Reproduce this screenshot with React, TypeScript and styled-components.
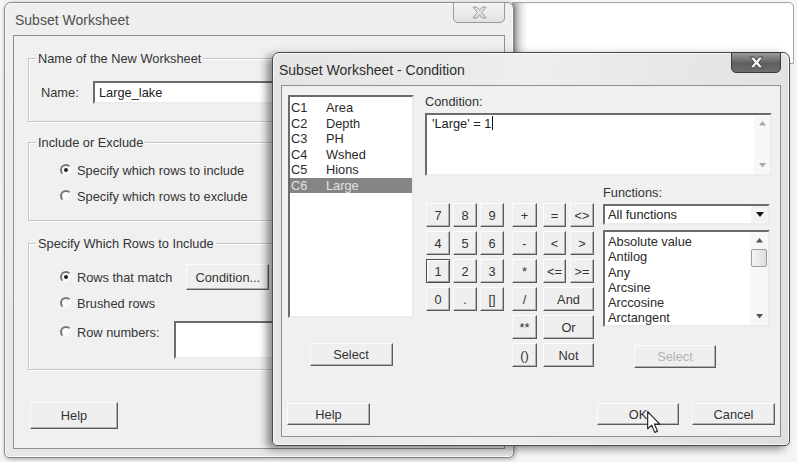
import React from "react";
import styled, { createGlobalStyle, css } from "styled-components";

const GlobalStyle = createGlobalStyle`
  html, body {
    margin: 0;
    padding: 0;
    background: #f5f5f5;
  }
  body {
    font-family: "Liberation Sans", Arial, sans-serif;
    font-size: 12.8px;
    color: #353535;
  }
`;

const uiFont = `12.8px "Liberation Sans", Arial, sans-serif`;

const Desktop = styled.div`
  position: relative;
  width: 797px;
  height: 462px;
  overflow: hidden;
  background: #f5f5f5;
`;

// white pane of another window peeking out behind the dialogs
const BackPane = styled.div`
  position: absolute;
  left: 512px;
  top: 2px;
  width: 282px;
  height: 62px;
  box-sizing: border-box;
  background: #fff;
  border: 1px solid #a4a4a4;
  border-radius: 0 5px 0 0;
  box-shadow: inset 12px 0 10px -6px rgba(0, 0, 0, 0.35);
`;

const Frame = styled.section<{ $x: number; $y: number; $w: number; $h: number; $active?: boolean }>`
  position: absolute;
  left: ${(p) => p.$x}px;
  top: ${(p) => p.$y}px;
  width: ${(p) => p.$w}px;
  height: ${(p) => p.$h}px;
  box-sizing: border-box;
  display: flex;
  flex-direction: column;
  padding: 0 8px 8px;
  border: 1px solid ${(p) => (p.$active ? "#4a4a4a" : "#8a8a8a")};
  border-radius: 7px 7px 5px 5px;
  background: ${(p) =>
    p.$active
      ? "linear-gradient(100deg, #e4e4e4 0%, #eeeeee 45%, #dedede 100%)"
      : "linear-gradient(180deg, #efefef, #e6e6e6)"};
  box-shadow: inset 0 0 0 1px rgba(255, 255, 255, 0.7),
    ${(p) => (p.$active ? "-5px 3px 9px rgba(0,0,0,.45)" : "1px 1px 4px rgba(0,0,0,.35)")};
`;

const TitleBar = styled.header`
  height: 32px;
  flex-shrink: 0;
  display: flex;
  align-items: flex-start;
  justify-content: space-between;
`;

const Title = styled.h1<{ $active?: boolean }>`
  margin: 0 0 0 ${(p) => (p.$active ? -2 : 2)}px;
  padding-top: 9px;
  font: 14px "Liberation Sans", Arial, sans-serif;
  color: ${(p) => (p.$active ? "#2e2e2e" : "#505050")};
`;

const CloseButton = styled.div<{ $active?: boolean }>`
  width: ${(p) => (p.$active ? 50 : 52)}px;
  height: 21px;
  margin-top: -1px;
  box-sizing: border-box;
  display: flex;
  align-items: center;
  justify-content: center;
  border-radius: 0 0 5px 5px;
  border: 1px solid ${(p) => (p.$active ? "#3a3a3a" : "#9a9a9a")};
  background: ${(p) =>
    p.$active ? "linear-gradient(180deg, #9a9a9a, #5e5e5e 55%, #6e6e6e)" : "linear-gradient(180deg, #f4f4f4, #e2e2e2)"};
`;

const Client = styled.div`
  flex: 1;
  min-height: 0;
  display: flex;
  flex-direction: column;
  background: #f0f0f0;
  border: 1px solid #8e8e8e;
`;

/* ---------- common controls ---------- */

const PushButton = styled.button<{ $w: number; $h: number; $focused?: boolean }>`
  width: ${(p) => p.$w}px;
  height: ${(p) => p.$h}px;
  flex-shrink: 0;
  box-sizing: border-box;
  padding: 0;
  font: ${uiFont};
  color: #333;
  background: #efefef;
  border: 1px solid;
  border-color: #fbfbfb #5a5a5a #5a5a5a #fbfbfb;
  box-shadow: inset -1px -1px 0 #b2b2b2;
  ${(p) =>
    p.$focused &&
    css`
      border-color: #4e4e4e;
      box-shadow: inset 1px 1px 0 #fff, inset -1px -1px 0 #9a9a9a;
    `}
  &:disabled {
    color: #b4b4b4;
  }
`;

const sunken = css`
  box-sizing: border-box;
  background: #fff;
  border: 2px solid;
  border-color: #6c6c6c #ececec #ececec #6c6c6c;
`;

const RadioRow = styled.label<{ $align?: string; $h?: number; $top?: number }>`
  display: flex;
  align-items: ${(p) => p.$align || "center"};
  height: ${(p) => (p.$h ? `${p.$h}px` : "auto")};
  margin-top: ${(p) => p.$top || 0}px;
  gap: 14px;
`;

const RadioOption = styled.span`
  height: 22px;
  display: flex;
  align-items: center;
  gap: 5px;
`;

const RadioMark = styled.span<{ $checked?: boolean }>`
  position: relative;
  width: 12px;
  height: 12px;
  box-sizing: border-box;
  border-radius: 50%;
  border: 2px solid;
  border-color: #767676 #f4f4f4 #f4f4f4 #767676;
  background: #fafafa;
  ${(p) =>
    p.$checked &&
    css`
      &::after {
        content: "";
        position: absolute;
        left: 2px;
        top: 2px;
        width: 4px;
        height: 4px;
        border-radius: 50%;
        background: #222;
      }
    `}
`;

/* ---------- back dialog ---------- */

const BackBody = styled.div`
  display: flex;
  flex-direction: column;
  padding: 0 12px 0 14px;
`;

const Group = styled.div<{ $gap: number }>`
  position: relative;
  margin-top: ${(p) => p.$gap}px;
  border: 1px solid #c4c4c4;
  box-shadow: 1px 1px 0 #fff, inset 1px 1px 0 #fff;
`;

// caption sitting on the group's top border
const GroupTitle = styled.span`
  position: absolute;
  left: 7px;
  top: -8px;
  padding: 0 2px;
  line-height: 15px;
  background: #f0f0f0;
  color: #333;
`;

const GroupContent = styled.div<{ $pad: string }>`
  display: flex;
  flex-direction: column;
  padding: ${(p) => p.$pad};
`;

const NameRow = styled.div`
  display: flex;
  align-items: center;
`;

const NameLabel = styled.span`
  width: 52px;
`;

const TextField = styled.div<{ $w: number; $h: number }>`
  ${sunken};
  width: ${(p) => p.$w}px;
  height: ${(p) => p.$h}px;
  padding: 2px 4px;
  line-height: 15px;
  color: #222;
`;

const BackFooter = styled.div`
  margin: 32px 0 0 2px;
`;

/* ---------- condition dialog ---------- */

const CondBody = styled.div`
  display: flex;
  gap: 11px;
  padding: 9px 8px 0 6px;
`;

const ColumnPane = styled.div`
  width: 126px;
  display: flex;
  flex-direction: column;
  align-items: center;
  gap: 25px;
`;

const ListBox = styled.ul<{ $w: number; $h: number }>`
  ${sunken};
  width: ${(p) => p.$w}px;
  height: ${(p) => p.$h}px;
  margin: 0;
  padding: 3px 0 0;
  list-style: none;
  overflow: hidden;
`;

const ColumnItem = styled.li<{ $selected?: boolean }>`
  display: flex;
  height: 15.5px;
  line-height: 15.5px;
  padding-left: 1px;
  color: ${(p) => (p.$selected ? "#e2e2e2" : "#2a2a2a")};
  background: ${(p) => (p.$selected ? "#858585" : "transparent")};
`;

const ColId = styled.span`
  width: 35px;
`;

const RightPane = styled.div`
  width: 347px;
  display: flex;
  flex-direction: column;
`;

const FieldLabel = styled.div`
  line-height: 14px;
  margin-bottom: 4px;
  color: #333;
`;

const ConditionArea = styled.div`
  ${sunken};
  height: 63px;
  display: flex;
  justify-content: space-between;
`;

const ConditionText = styled.div`
  padding: 1px 5px;
  line-height: 15px;
  color: #222;
`;

const Caret = styled.span`
  display: inline-block;
  width: 1px;
  height: 14px;
  margin-left: 1px;
  vertical-align: -2px;
  background: #111;
`;

const ScrollTrack = styled.div<{ $w: number }>`
  width: ${(p) => p.$w}px;
  display: flex;
  flex-direction: column;
  justify-content: space-between;
  align-items: center;
  background: #f7f7f7;
  flex-shrink: 0;
`;

const ArrowCell = styled.div`
  height: 17px;
  display: flex;
  align-items: center;
  justify-content: center;
`;

const Thumb = styled.div`
  width: 16px;
  height: 18px;
  box-sizing: border-box;
  border: 1px solid #9c9c9c;
  border-radius: 2px;
  background: linear-gradient(90deg, #f4f4f4, #dedede);
`;

const TrackGap = styled.div`
  flex: 1;
`;

const LowerRow = styled.div`
  display: flex;
  align-items: flex-start;
`;

const Keypad = styled.div`
  margin: 27px 0 0 1px;
  display: grid;
  grid-template-columns: 27px 27px 32px 31px 27px 24px;
  grid-auto-rows: 28px;
`;

const KeyCell = styled.div<{ $col: number; $row: number; $span?: number }>`
  grid-column: ${(p) => p.$col} / span ${(p) => p.$span || 1};
  grid-row: ${(p) => p.$row};
`;

const FunctionsPane = styled.div`
  width: 167px;
  margin: 10px 0 0 9px;
  display: flex;
  flex-direction: column;
`;

const Dropdown = styled.div`
  ${sunken};
  height: 21px;
  display: flex;
  align-items: center;
  justify-content: space-between;
  padding-left: 3px;
  color: #222;
`;

const DropButton = styled.div`
  width: 17px;
  height: 17px;
  display: flex;
  align-items: center;
  justify-content: center;
  background: #f2f2f2;
`;

const FunctionList = styled.div`
  ${sunken};
  height: 97px;
  margin-top: 5px;
  display: flex;
  justify-content: space-between;
  overflow: hidden;
`;

const FunctionItems = styled.ul`
  margin: 0;
  padding: 2px 0 0 3px;
  list-style: none;
  line-height: 15.3px;
  color: #2a2a2a;
`;

const FuncSelect = styled.div`
  margin: 18px 0 0 31px;
`;

const CondFooter = styled.div`
  margin-top: auto;
  display: flex;
  justify-content: space-between;
  padding: 0 5px 11px 5px;
`;

const ButtonGroup = styled.div`
  display: flex;
  gap: 13px;
`;

const Pointer = styled.svg`
  position: absolute;
  left: 647px;
  top: 411px;
`;

/* ---------- small drawings ---------- */

const CloseGlyph: React.FC<{ active?: boolean }> = ({ active }) => (
  <svg width="15" height="13" viewBox="0 0 14 12">
    <polygon
      points="1,1 4.5,1 7,4 9.5,1 13,1 9,6 13,11 9.5,11 7,8 4.5,11 1,11 5,6"
      fill={active ? "#fff" : "#e6e6e6"}
      stroke={active ? "#333" : "#8a8a8a"}
      strokeWidth="0.8"
      strokeLinejoin="round"
    />
  </svg>
);

const Tri: React.FC<{ up?: boolean; color?: string; size?: number }> = ({ up, color = "#9a9a9a", size = 7 }) => (
  <svg width={size} height={size / 2 + 1} viewBox="0 0 8 5">
    <polygon points={up ? "0,5 8,5 4,0" : "0,0 8,0 4,5"} fill={color} />
  </svg>
);

const columns = [
  ["C1", "Area"],
  ["C2", "Depth"],
  ["C3", "PH"],
  ["C4", "Wshed"],
  ["C5", "Hions"],
  ["C6", "Large"],
];

const functions = ["Absolute value", "Antilog", "Any", "Arcsine", "Arccosine", "Arctangent"];

type Key = { label: string; col: number; row: number; span?: number; w?: number; focused?: boolean };

const keys: Key[] = [
  { label: "7", col: 1, row: 1 },
  { label: "8", col: 2, row: 1 },
  { label: "9", col: 3, row: 1 },
  { label: "+", col: 4, row: 1, w: 25 },
  { label: "=", col: 5, row: 1, w: 23 },
  { label: "<>", col: 6, row: 1 },
  { label: "4", col: 1, row: 2 },
  { label: "5", col: 2, row: 2 },
  { label: "6", col: 3, row: 2 },
  { label: "-", col: 4, row: 2, w: 25 },
  { label: "<", col: 5, row: 2, w: 23 },
  { label: ">", col: 6, row: 2 },
  { label: "1", col: 1, row: 3, focused: true },
  { label: "2", col: 2, row: 3 },
  { label: "3", col: 3, row: 3 },
  { label: "*", col: 4, row: 3, w: 25 },
  { label: "<=", col: 5, row: 3, w: 23 },
  { label: ">=", col: 6, row: 3 },
  { label: "0", col: 1, row: 4 },
  { label: ".", col: 2, row: 4 },
  { label: "[]", col: 3, row: 4 },
  { label: "/", col: 4, row: 4, w: 25 },
  { label: "And", col: 5, row: 4, span: 2, w: 51 },
  { label: "**", col: 4, row: 5, w: 25 },
  { label: "Or", col: 5, row: 5, span: 2, w: 51 },
  { label: "()", col: 4, row: 6, w: 25 },
  { label: "Not", col: 5, row: 6, span: 2, w: 51 },
];

export default function App() {
  return (
    <Desktop>
      <GlobalStyle />
      <BackPane />

      <Frame $x={4} $y={2} $w={510} $h={456}>
        <TitleBar>
          <Title>Subset Worksheet</Title>
          <CloseButton>
            <CloseGlyph />
          </CloseButton>
        </TitleBar>
        <Client>
          <BackBody>
            <Group $gap={22}>
              <GroupTitle>Name of the New Worksheet</GroupTitle>
              <GroupContent $pad="22px 10px 17px 12px">
                <NameRow>
                  <NameLabel>Name:</NameLabel>
                  <TextField $w={380} $h={23}>Large_lake</TextField>
                </NameRow>
              </GroupContent>
            </Group>

            <Group $gap={20}>
              <GroupTitle>Include or Exclude</GroupTitle>
              <GroupContent $pad="14px 10px 11px 31px">
                <RadioRow $h={26}>
                  <RadioOption>
                    <RadioMark $checked />
                    Specify which rows to include
                  </RadioOption>
                </RadioRow>
                <RadioRow $h={26}>
                  <RadioOption>
                    <RadioMark />
                    Specify which rows to exclude
                  </RadioOption>
                </RadioRow>
              </GroupContent>
            </Group>

            <Group $gap={22}>
              <GroupTitle>Specify Which Rows to Include</GroupTitle>
              <GroupContent $pad="20px 10px 10px 31px">
                <RadioRow $h={26}>
                  <RadioOption>
                    <RadioMark $checked />
                    Rows that match
                  </RadioOption>
                  <PushButton $w={83} $h={26}>Condition...</PushButton>
                </RadioRow>
                <RadioRow $h={26}>
                  <RadioOption>
                    <RadioMark />
                    Brushed rows
                  </RadioOption>
                </RadioRow>
                <RadioRow $align="flex-start" $top={5}>
                  <RadioOption>
                    <RadioMark />
                    Row numbers:
                  </RadioOption>
                  <TextField $w={220} $h={38} />
                </RadioRow>
              </GroupContent>
            </Group>

            <BackFooter>
              <PushButton $w={88} $h={27}>Help</PushButton>
            </BackFooter>
          </BackBody>
        </Client>
      </Frame>

      <Frame $x={272} $y={52} $w={518} $h={394} $active>
        <TitleBar>
          <Title $active>Subset Worksheet - Condition</Title>
          <CloseButton $active>
            <CloseGlyph active />
          </CloseButton>
        </TitleBar>
        <Client>
          <CondBody>
            <ColumnPane>
              <ListBox $w={126} $h={223}>
                {columns.map(([id, name]) => (
                  <ColumnItem key={id} $selected={id === "C6"}>
                    <ColId>{id}</ColId>
                    {name}
                  </ColumnItem>
                ))}
              </ListBox>
              <PushButton $w={83} $h={23}>Select</PushButton>
            </ColumnPane>

            <RightPane>
              <FieldLabel>Condition:</FieldLabel>
              <ConditionArea>
                <ConditionText>
                  'Large' = 1<Caret />
                </ConditionText>
                <ScrollTrack $w={16}>
                  <ArrowCell>
                    <Tri up color="#a8a8a8" />
                  </ArrowCell>
                  <ArrowCell>
                    <Tri color="#a8a8a8" />
                  </ArrowCell>
                </ScrollTrack>
              </ConditionArea>

              <LowerRow>
                <Keypad>
                  {keys.map((k) => (
                    <KeyCell key={k.label} $col={k.col} $row={k.row} $span={k.span}>
                      <PushButton $w={k.w || 24} $h={24} $focused={k.focused}>
                        {k.label}
                      </PushButton>
                    </KeyCell>
                  ))}
                </Keypad>

                <FunctionsPane>
                  <FieldLabel>Functions:</FieldLabel>
                  <Dropdown>
                    All functions
                    <DropButton>
                      <Tri color="#111" size={8} />
                    </DropButton>
                  </Dropdown>
                  <FunctionList>
                    <FunctionItems>
                      {functions.map((f) => (
                        <li key={f}>{f}</li>
                      ))}
                    </FunctionItems>
                    <ScrollTrack $w={18}>
                      <ArrowCell>
                        <Tri up color="#555" />
                      </ArrowCell>
                      <Thumb />
                      <TrackGap />
                      <ArrowCell>
                        <Tri color="#555" />
                      </ArrowCell>
                    </ScrollTrack>
                  </FunctionList>
                  <FuncSelect>
                    <PushButton $w={82} $h={23} disabled>
                      Select
                    </PushButton>
                  </FuncSelect>
                </FunctionsPane>
              </LowerRow>
            </RightPane>
          </CondBody>

          <CondFooter>
            <PushButton $w={83} $h={22}>Help</PushButton>
            <ButtonGroup>
              <PushButton $w={82} $h={22}>OK</PushButton>
              <PushButton $w={83} $h={22}>Cancel</PushButton>
            </ButtonGroup>
          </CondFooter>
        </Client>
      </Frame>

      <Pointer width="14" height="23" viewBox="0 0 12 20">
        <path d="M0.5,0.5 L0.5,15.5 L4,12.3 L6.6,18.6 L9,17.6 L6.4,11.4 L11,11.4 Z" fill="#fff" stroke="#222" strokeWidth="1" strokeLinejoin="round" />
      </Pointer>
    </Desktop>
  );
}
